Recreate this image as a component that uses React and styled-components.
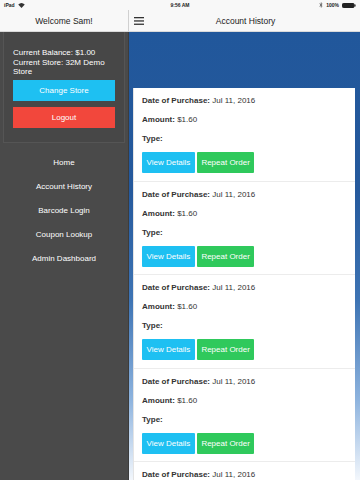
import styled, { createGlobalStyle } from "styled-components";

const GlobalStyle = createGlobalStyle`
  html, body {
    margin: 0;
    padding: 0;
    height: 100%;
  }
  body {
    font-family: "Liberation Sans", Arial, sans-serif;
    background: #ffffff;
  }
  #root {
    height: 100%;
  }
`;

const orders = [1, 2, 3, 4, 5].map((id) => ({
  id,
  date: "Jul 11, 2016",
  amount: "$1.60",
  type: "",
}));

const navItems = [
  "Home",
  "Account History",
  "Barcode Login",
  "Coupon Lookup",
  "Admin Dashboard",
];

function Wifi() {
  return (
    <svg width="7" height="5" viewBox="0 0 14 10">
      <path d="M7 10 L0.5 3.2 A9.5 9.5 0 0 1 13.5 3.2 Z" fill="#333" />
    </svg>
  );
}

function Battery() {
  return (
    <svg width="14" height="5" viewBox="0 0 14 5">
      <rect x="0.5" y="0.5" width="11.5" height="4" rx="0.8" fill="#222" stroke="#222" />
      <rect x="12.3" y="1.5" width="1.3" height="2" fill="#222" />
    </svg>
  );
}

function Bluetooth() {
  return (
    <svg width="4" height="6" viewBox="0 0 4 6">
      <path d="M0.5 1.6 L3.2 4.2 L2 5.3 V0.7 L3.2 1.8 L0.5 4.4" fill="none" stroke="#444" strokeWidth="0.6" />
    </svg>
  );
}

function Hamburger() {
  return (
    <svg width="10" height="8" viewBox="0 0 10 8">
      <rect x="0" y="0" width="10" height="1.3" fill="#333" />
      <rect x="0" y="3.3" width="10" height="1.3" fill="#333" />
      <rect x="0" y="6.6" width="10" height="1.3" fill="#333" />
    </svg>
  );
}

export default function App() {
  return (
    <>
      <GlobalStyle />
      <Screen>
        <StatusBar>
          <StatusSide>
            <span>iPad</span>
            <Wifi />
          </StatusSide>
          <StatusTime>9:56 AM</StatusTime>
          <StatusSide $right>
            <Bluetooth />
            <span>100%</span>
            <Battery />
          </StatusSide>
        </StatusBar>
        <Body>
          <SideBar>
            <SideHeader>Welcome Sam!</SideHeader>
            <AccountPanel>
              <Info>Current Balance: $1.00</Info>
              <Info>Current Store: 32M Demo Store</Info>
              <PanelButton $color="#1ec0f2" $gap="3px">Change Store</PanelButton>
              <PanelButton $color="#f2473c" $gap="6px">Logout</PanelButton>
            </AccountPanel>
            <Nav>
              {navItems.map((item) => (
                <NavItem key={item}>{item}</NavItem>
              ))}
            </Nav>
          </SideBar>
          <Main>
            <MainHeader>
              <MenuButton>
                <Hamburger />
              </MenuButton>
              <Title>Account History</Title>
            </MainHeader>
            <Content>
              <OrderCard>
                {orders.map((order) => (
                  <OrderRow key={order.id}>
                    <Line>
                      <b>Date of Purchase:</b> {order.date}
                    </Line>
                    <Line>
                      <b>Amount:</b> {order.amount}
                    </Line>
                    <Line>
                      <b>Type:</b> {order.type}
                    </Line>
                    <Actions>
                      <ActionButton $color="#1ec0f2">View Details</ActionButton>
                      <ActionButton $color="#2fc95c">Repeat Order</ActionButton>
                    </Actions>
                  </OrderRow>
                ))}
              </OrderCard>
            </Content>
          </Main>
        </Body>
      </Screen>
    </>
  );
}

const Screen = styled.div`
  width: 360px;
  height: 480px;
  overflow: hidden;
  display: flex;
  flex-direction: column;
`;

const StatusBar = styled.div`
  height: 10px;
  flex: none;
  background: #f8f8f8;
  display: grid;
  grid-template-columns: 1fr auto 1fr;
  align-items: center;
  padding: 0 4px;
  font-size: 5px;
  font-weight: bold;
  color: #222;
`;

const StatusSide = styled.div`
  display: flex;
  align-items: center;
  gap: 3px;
  justify-content: ${(p) => (p.$right ? "flex-end" : "flex-start")};
`;

const StatusTime = styled.div`
  text-align: center;
`;

const Body = styled.div`
  flex: 1;
  display: flex;
  min-height: 0;
`;

const SideBar = styled.div`
  width: 128px;
  flex: none;
  background: #4a4a4a;
  border-right: 1px solid #3c3c3c;
  display: flex;
  flex-direction: column;
`;

const SideHeader = styled.div`
  height: 21px;
  flex: none;
  background: #f8f8f8;
  border-bottom: 1px solid #dadada;
  border-right: 1px solid #d0d0d0;
  margin-right: -1px;
  display: flex;
  align-items: center;
  justify-content: center;
  font-size: 8.5px;
  color: #222;
`;

const AccountPanel = styled.div`
  margin: 0 3px 0 3px;
  padding: 16px 9px 14px 9px;
  background: #474747;
  border: 1px solid #555;
  border-top: none;
  display: flex;
  flex-direction: column;
`;

const Info = styled.div`
  font-size: 8px;
  line-height: 9.5px;
  color: #fff;
  padding-right: 6px;
`;

const PanelButton = styled.div`
  height: 21px;
  margin-top: ${(p) => p.$gap};
  background: ${(p) => p.$color};
  color: #fff;
  font-size: 8px;
  display: flex;
  align-items: center;
  justify-content: center;
`;

const Nav = styled.div`
  display: flex;
  flex-direction: column;
  padding-top: 8px;
`;

const NavItem = styled.div`
  height: 24px;
  display: flex;
  align-items: center;
  justify-content: center;
  font-size: 8px;
  color: #fff;
`;

const Main = styled.div`
  flex: 1;
  display: flex;
  flex-direction: column;
  min-width: 0;
`;

const MainHeader = styled.div`
  height: 21px;
  flex: none;
  background: #f8f8f8;
  border-bottom: 1px solid #dadada;
  position: relative;
  display: flex;
  align-items: center;
  justify-content: center;
`;

const MenuButton = styled.div`
  position: absolute;
  left: 5px;
  top: 7px;
  display: flex;
`;

const Title = styled.div`
  font-size: 8.5px;
  color: #222;
  padding-left: 2px;
`;

const Content = styled.div`
  flex: 1;
  min-height: 0;
  overflow: hidden;
  padding: 56px 5px 0 4px;
  background: linear-gradient(
    to bottom,
    #21579b 0%,
    #25599c 35%,
    #3e74b4 60%,
    #8db3de 82%,
    #f3f7fc 100%
  );
`;

const OrderCard = styled.div`
  background: #fff;
  border-left: 1px solid #e4e4e4;
`;

const OrderRow = styled.div`
  height: 93.5px;
  box-sizing: border-box;
  padding: 8px 8px 0 8px;
  border-bottom: 1px solid #ececec;
  display: flex;
  flex-direction: column;
`;

const Line = styled.div`
  font-size: 8px;
  line-height: 9px;
  color: #333;
  margin-bottom: 10px;
  b {
    color: #333;
  }
`;

const Actions = styled.div`
  display: flex;
  gap: 2px;
  margin-top: -1px;
`;

const ActionButton = styled.div`
  height: 21px;
  padding: 0 4.5px;
  background: ${(p) => p.$color};
  color: #fff;
  font-size: 8px;
  display: flex;
  align-items: center;
  border-radius: 1px;
`;
